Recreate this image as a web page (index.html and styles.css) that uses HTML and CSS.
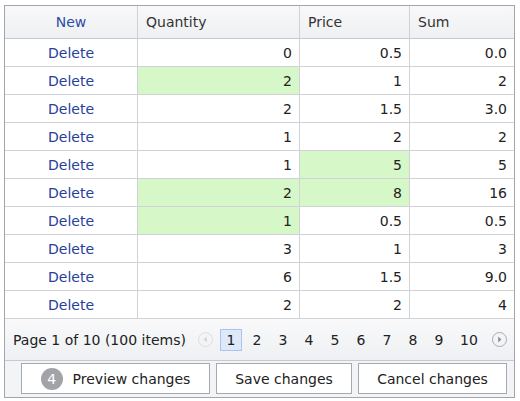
FILE: index.html
```html
<!DOCTYPE html>
<html>
<head>
<meta charset="utf-8">
<link rel="stylesheet" href="styles.css">
</head>
<body>
<div class="grid">
  <div class="row head">
    <div class="cell center link-head">New</div>
    <div class="cell">Quantity</div>
    <div class="cell">Price</div>
    <div class="cell last">Sum</div>
  </div>
  <div class="row"><div class="cell center del">Delete</div><div class="cell num">0</div><div class="cell num">0.5</div><div class="cell num last">0.0</div></div>
  <div class="row"><div class="cell center del">Delete</div><div class="cell num mod">2</div><div class="cell num">1</div><div class="cell num last">2</div></div>
  <div class="row"><div class="cell center del">Delete</div><div class="cell num">2</div><div class="cell num">1.5</div><div class="cell num last">3.0</div></div>
  <div class="row"><div class="cell center del">Delete</div><div class="cell num">1</div><div class="cell num">2</div><div class="cell num last">2</div></div>
  <div class="row"><div class="cell center del">Delete</div><div class="cell num">1</div><div class="cell num mod">5</div><div class="cell num last">5</div></div>
  <div class="row"><div class="cell center del">Delete</div><div class="cell num mod">2</div><div class="cell num mod">8</div><div class="cell num last">16</div></div>
  <div class="row"><div class="cell center del">Delete</div><div class="cell num mod">1</div><div class="cell num">0.5</div><div class="cell num last">0.5</div></div>
  <div class="row"><div class="cell center del">Delete</div><div class="cell num">3</div><div class="cell num">1</div><div class="cell num last">3</div></div>
  <div class="row"><div class="cell center del">Delete</div><div class="cell num">6</div><div class="cell num">1.5</div><div class="cell num last">9.0</div></div>
  <div class="row"><div class="cell center del">Delete</div><div class="cell num">2</div><div class="cell num">2</div><div class="cell num last">4</div></div>
  <div class="pager">
    <span class="summary">Page 1 of 10 (100 items)</span>
    <span class="nav">
      <span class="arrow"><svg width="15" height="15" viewBox="0 0 15 15"><circle cx="7.5" cy="7.5" r="7" fill="#f4f4f6" stroke="#dcdde2"/><path d="M8.8 4.5 L5.6 7.5 L8.8 10.5 Z" fill="#d4d5da"/></svg></span>
      <span class="pg active">1</span>
      <span class="pg">2</span>
      <span class="pg">3</span>
      <span class="pg">4</span>
      <span class="pg">5</span>
      <span class="pg">6</span>
      <span class="pg">7</span>
      <span class="pg">8</span>
      <span class="pg">9</span>
      <span class="pg wide">10</span>
      <span class="arrow"><svg width="15" height="15" viewBox="0 0 15 15"><circle cx="7.5" cy="7.5" r="7" fill="#f4f4f6" stroke="#a9abb3"/><path d="M6.2 4.5 L9.4 7.5 L6.2 10.5 Z" fill="#8c8e96"/></svg></span>
    </span>
  </div>
  <div class="actions">
    <button class="btn preview"><span class="badge">4</span><span>Preview changes</span></button>
    <button class="btn save">Save changes</button>
    <button class="btn cancel">Cancel changes</button>
  </div>
</div>
</body>
</html>
```
FILE: styles.css
```css
html, body {
  margin: 0;
  padding: 0;
  background: #ffffff;
}
body {
  padding: 5px 0 0 4px;
  font-family: "DejaVu Sans", Verdana, sans-serif;
  font-size: 14px;
  color: #222222;
}
.grid {
  width: 509px;
  border: 1px solid #a3a5ad;
  background: #ffffff;
}
.row {
  display: grid;
  grid-template-columns: 133px 162px 110px 104px;
  height: 28px;
}
.row.head {
  height: 33px;
  background: linear-gradient(#f8f8f9, #eff0f3);
  color: #333333;
}
.cell {
  box-sizing: border-box;
  border-right: 1px solid #d1d2d8;
  border-bottom: 1px solid #d1d2d8;
  padding: 0 8px;
  display: flex;
  align-items: center;
  white-space: nowrap;
}
.row.head .cell {
  border-bottom-color: #c8c9cf;
}
.cell.last {
  border-right: none;
}
.cell.center {
  justify-content: center;
}
.cell.num {
  justify-content: flex-end;
  padding-right: 7px;
}
.cell.mod {
  background: #d6f8c8;
}
.del {
  color: #27409b;
}
.link-head {
  color: #2a4ea6;
}
.pager {
  box-sizing: border-box;
  height: 42px;
  display: flex;
  align-items: center;
  justify-content: space-between;
  padding: 0 7px 0 8px;
  background: linear-gradient(#f9f9fa, #eef0f3);
  border-bottom: 1px solid #c8c9cf;
}
.nav {
  display: flex;
  align-items: center;
  gap: 4px;
}
.arrow {
  display: flex;
  width: 15px;
  height: 15px;
  margin: 0 3px 0 0;
}
.arrow:last-child {
  margin: 0 0 0 4px;
}
.pg {
  box-sizing: border-box;
  width: 22px;
  height: 22px;
  display: flex;
  align-items: center;
  justify-content: center;
  color: #222222;
}
.pg.wide {
  width: 30px;
}
.pg.active {
  background: #dde8f9;
  border: 1px solid #aac4ee;
}
.actions {
  height: 36px;
  box-sizing: border-box;
  padding: 2px 0 0 16px;
  display: flex;
  gap: 6px;
  background: #f3f4f6;
}
.btn {
  box-sizing: border-box;
  height: 31px;
  background: #ffffff;
  border: 1px solid #a7a9b0;
  font-family: "DejaVu Sans", Verdana, sans-serif;
  font-size: 14px;
  color: #222222;
  padding: 0;
  display: flex;
  align-items: center;
  justify-content: center;
  gap: 10px;
  margin: 0;
}
.btn.preview { width: 189px; }
.btn.save { width: 136px; }
.btn.cancel { width: 149px; }
.badge {
  width: 22px;
  height: 22px;
  border-radius: 50%;
  background: #a2a3a9;
  color: #ffffff;
  display: flex;
  align-items: center;
  justify-content: center;
  font-size: 14px;
}
```
